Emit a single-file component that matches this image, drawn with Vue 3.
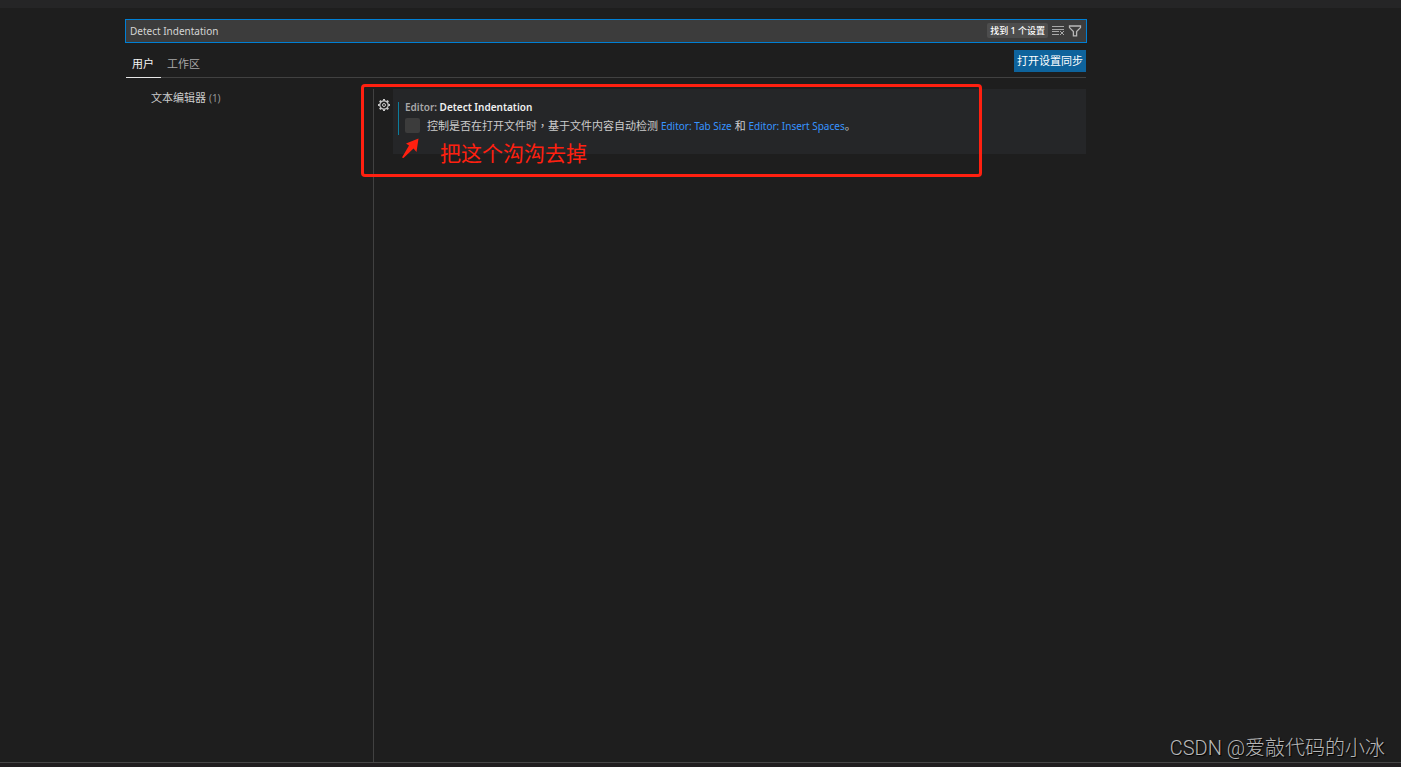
<script setup>
import { ref } from 'vue'

const query = ref('Detect Indentation')
const detect = ref(false)
const rim = Array.from({ length: 8 }, (_, i) => i * 45)
</script>

<template>
  <div class="window">
    <div class="strip"></div>
    <main class="editor">
      <header class="head">
        <div class="search">
          <input v-model="query" class="query" type="text" aria-label="搜索设置" />
          <span class="count">找到 1 个设置</span>
          <button class="tool" type="button" aria-label="清除">
            <svg width="14" height="12" viewBox="0 0 14 12" fill="none" stroke="#a8a8a8">
              <path d="M1 1.500h12M1 4.500h12M1 6.500h7M1 9.500h7M9 6l4 4M13 6l-4 4" />
            </svg>
          </button>
          <button class="tool" type="button" aria-label="筛选">
            <svg width="14" height="12" viewBox="0 0 14 12" fill="none" stroke="#b8b8b8" stroke-width="1.300">
              <path d="M1.500 1h11v1.600L8.600 6.600v4.200H5.400V6.600L1.500 2.600z" />
            </svg>
          </button>
        </div>
        <div class="bar">
          <nav class="tabs">
            <button class="tab active" type="button">用户</button>
            <button class="tab" type="button">工作区</button>
          </nav>
          <button class="sync" type="button">打开设置同步</button>
        </div>
      </header>
      <div class="body">
        <aside class="toc">
          <a href="#editor" class="toc-link">文本编辑器 <span class="num">(1)</span></a>
        </aside>
        <section id="editor" class="results">
          <button class="gear" type="button" aria-label="更多操作">
            <svg width="12" height="12" viewBox="0 0 12 12" fill="none" stroke="#c8c8c8">
              <circle cx="6" cy="6" r="4.2" stroke-width="1.2" />
              <circle cx="6" cy="6" r="1.5" />
              <path v-for="a in rim" :key="a" d="M6 0v1.800" stroke-width="2" :transform="`rotate(${a} 6 6)`" />
            </svg>
          </button>
          <div class="item">
            <div class="content">
              <h2 class="title"><span class="cat">Editor: </span>Detect Indentation</h2>
              <div class="option">
                <input id="detect" v-model="detect" type="checkbox" class="check" />
                <p class="desc">
                  <label for="detect">控制是否在打开文件时<span lang="zh-Hant" class="comma">，</span>基于文件内容自动检测</label>{{ ' ' }}<a href="#tab-size">Editor: Tab Size</a> 和 <a href="#insert-spaces">Editor: Insert Spaces</a>。
                </p>
              </div>
            </div>
          </div>
          <div class="frame">
            <svg class="arrow" width="20" height="24" viewBox="0 0 20 24">
              <path d="M17.500 1.500L15.500 15L12.500 11.500L2.500 21L1 20.500L8 8.500L5 6.500z" fill="#ff2010" />
            </svg>
            <span class="note">把这个沟沟去掉</span>
          </div>
        </section>
      </div>
    </main>
    <footer class="foot"></footer>
    <div class="mark">CSDN @爱敲代码的小冰</div>
  </div>
</template>

<style>
body {
  margin: 0;
  background: #1e1e1e;
}
</style>

<style scoped>
.window {
  position: relative;
  display: flex;
  flex-direction: column;
  min-height: 100vh;
  background: #1e1e1e;
  color: #ccc;
  font: 11px/16px "Noto Sans", "Noto Sans CJK SC", sans-serif;
}
.window * {
  box-sizing: border-box;
}
button {
  margin: 0;
  padding: 0;
  border: 0;
  background: none;
  color: inherit;
  font: inherit;
}
.strip {
  height: 8px;
  background: #252526;
}
.editor {
  flex: 1;
  display: flex;
  flex-direction: column;
  margin: 11px 314px 0 125px;
}
.search {
  display: flex;
  align-items: center;
  gap: 3px;
  height: 24px;
  padding: 0 4px 1px 0;
  border: 1px solid #007fd4;
  background: #3c3c3c;
}
.query {
  flex: 1;
  min-width: 0;
  height: 20px;
  padding: 0 4px;
  border: 0;
  outline: 0;
  background: none;
  color: #d4d4d4;
  font: inherit;
  font-size: 10px;
}
.count {
  padding: 0 3px;
  border-radius: 2px;
  background: #4d4d4d;
  color: #fff;
  font-size: 9px;
  font-weight: 500;
  line-height: 15px;
  white-space: nowrap;
}
.tool {
  display: flex;
}
.bar {
  display: flex;
  justify-content: space-between;
  margin: 7px 1px 0;
  height: 28px;
  border-bottom: 1px solid #414141;
}
.tabs {
  display: flex;
}
.tab {
  height: 28px;
  padding: 0 6px;
  color: #a8a8a8;
}
.tab.active {
  padding-right: 7px;
  border-bottom: 1px solid #e7e7e7;
  color: #f4f4f4;
}
.sync {
  height: 22px;
  padding: 0 3px;
  background: #0e639c;
  color: #fff;
}
.body {
  flex: 1;
  display: flex;
  margin: 11px 1px 0 0;
}
.toc {
  width: 248px;
  padding-left: 26px;
}
.toc-link {
  display: block;
  line-height: 18px;
  color: #ccc;
  text-decoration: none;
}
.num {
  color: #979797;
  font-size: 10px;
}
.results {
  position: relative;
  flex: 1;
  display: flex;
  align-items: flex-start;
  border-left: 1px solid #414141;
}
.gear {
  display: flex;
  margin: 10px 3px 0 4px;
}
.item {
  flex: 1;
  height: 65px;
  padding: 13px 5px;
  background: #252628;
}
.content {
  height: 33px;
  border-left: 1px solid #0c7d9d;
  padding-left: 6px;
}
.title {
  margin: 0;
  color: #f0f0f0;
  font-size: 10px;
  font-weight: 600;
  line-height: 11px;
}
.cat {
  color: #a8a8a8;
}
.option {
  display: flex;
  align-items: center;
  gap: 7px;
  margin-top: 4px;
}
.check {
  appearance: none;
  width: 15px;
  height: 15px;
  margin: 0;
  border-radius: 2px;
  background: #3c3c3c;
}
.desc {
  margin: 0;
  white-space: nowrap;
}
.comma {
  font-family: "Noto Sans CJK TC", sans-serif;
}
.desc a {
  color: #3794ff;
  font-size: 10px;
  text-decoration: none;
}
.frame {
  position: absolute;
  top: -5px;
  left: -13px;
  right: 104px;
  height: 93px;
  border: 3px solid #ff2010;
  border-radius: 4px;
  pointer-events: none;
}
.arrow {
  position: absolute;
  left: 37px;
  top: 50px;
}
.note {
  position: absolute;
  left: 76px;
  top: 54px;
  color: #ff2010;
  font-size: 21px;
  line-height: 24px;
  white-space: nowrap;
}
.foot {
  height: 5px;
  border-top: 1px solid #464646;
  background: #211e20;
  box-sizing: border-box;
}
.mark {
  position: absolute;
  right: 16px;
  bottom: 5px;
  color: #b8b8b8;
  font: 300 20px/28px Roboto, "Noto Sans CJK SC", sans-serif;
  text-shadow: 1px 1px 1px #000;
  white-space: nowrap;
}
</style>
